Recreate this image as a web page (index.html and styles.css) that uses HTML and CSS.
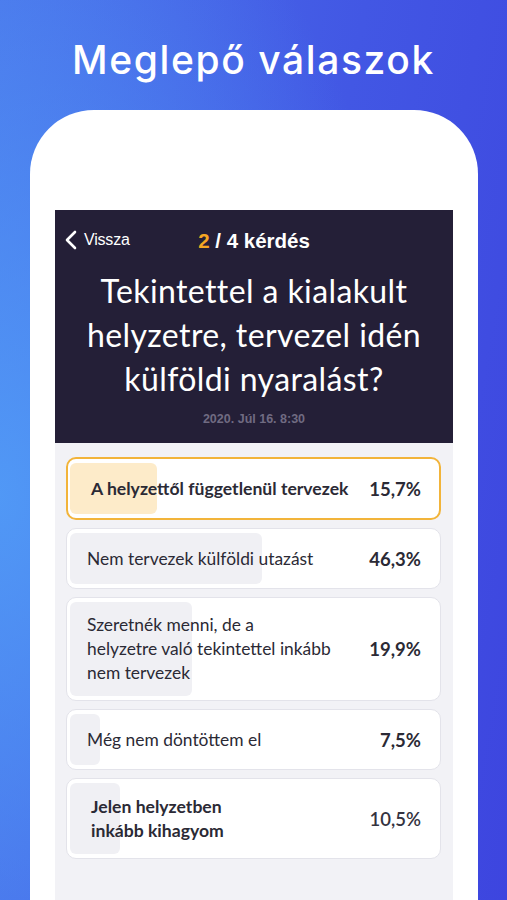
FILE: index.html
```html
<!DOCTYPE html>
<html lang="hu">
<head>
    <meta charset="UTF-8">
    <meta name="viewport" content="width=device-width, initial-scale=1.0">
    <title>Meglepő válaszok</title>
    <link rel="stylesheet" href="styles.css">
</head>
<body>
    <h1 class="headline">Meglepő válaszok</h1>
    <div class="phone">
        <div class="screen">
            <div class="question-header">
                <div class="nav-row">
                    <a class="back-link" href="#">
                        <svg width="12" height="20" viewBox="0 0 12 20"><polyline points="10,2 2,10 10,18" fill="none" stroke="#fff" stroke-width="2.6" stroke-linecap="round" stroke-linejoin="round"/></svg>
                        Vissza
                    </a>
                    <div class="counter"><span class="current">2</span> / 4 kérdés</div>
                </div>
                <p class="question">Tekintettel a kialakult helyzetre, tervezel idén külföldi nyaralást?</p>
                <p class="date">2020. Júl 16. 8:30</p>
            </div>
            <div class="answers">
                <div class="answer selected">
                    <div class="fill" style="width: 87px"></div>
                    <span class="answer-text bold">A helyzettől függetlenül tervezek</span>
                    <span class="percent">15,7%</span>
                </div>
                <div class="answer">
                    <div class="fill" style="width: 192px"></div>
                    <span class="answer-text">Nem tervezek külföldi utazást</span>
                    <span class="percent">46,3%</span>
                </div>
                <div class="answer">
                    <div class="fill" style="width: 122px"></div>
                    <span class="answer-text">Szeretnék menni, de a<br>helyzetre való tekintettel inkább<br>nem tervezek</span>
                    <span class="percent">19,9%</span>
                </div>
                <div class="answer">
                    <div class="fill" style="width: 30px"></div>
                    <span class="answer-text">Még nem döntöttem el</span>
                    <span class="percent">7,5%</span>
                </div>
                <div class="answer tall">
                    <div class="fill" style="width: 50px"></div>
                    <span class="answer-text bold">Jelen helyzetben<br>inkább kihagyom</span>
                    <span class="percent light">10,5%</span>
                </div>
            </div>
        </div>
    </div>
</body>
</html>
```

FILE: styles.css
```css
body {
    margin: 0;
    height: 900px;
    overflow: hidden;
    font-family: Lato, "Noto Sans", sans-serif;
    background:
        radial-gradient(ellipse 420px 700px at 0% 55%, rgba(82, 160, 248, 0.85) 0%, rgba(82, 160, 248, 0) 100%),
        linear-gradient(100deg, #4a72ea 0%, #4257e4 55%, #3d45df 100%);
    display: flex;
    flex-direction: column;
}
.headline {
    margin: 0;
    padding-top: 38px;
    height: 74px;
    box-sizing: border-box;
    text-align: center;
    color: white;
    font-family: Inter, sans-serif;
    font-weight: 500;
    font-size: 39px;
    letter-spacing: 1.6px;
    line-height: 44px;
}
.phone {
    flex: 1;
    margin: 36px 29px 0 30px;
    background: white;
    border-radius: 64px 64px 0 0;
    padding: 100px 25px 0;
    display: flex;
}
.screen {
    flex: 1;
    background: #f2f2f6;
    display: flex;
    flex-direction: column;
}
.question-header {
    background: #241f37;
    height: 233px;
    box-sizing: border-box;
    padding: 20px 8px 0;
    color: white;
    text-align: center;
}
.nav-row {
    position: relative;
    height: 22px;
    display: flex;
    justify-content: center;
    align-items: center;
}
.back-link {
    position: absolute;
    left: 2px;
    top: 0;
    display: flex;
    align-items: center;
    gap: 7px;
    color: white;
    text-decoration: none;
    font-size: 16px;
    font-family: "Liberation Sans", sans-serif;
    letter-spacing: -0.2px;
}
.counter {
    font-size: 20.5px;
    font-weight: bold;
    font-family: "Liberation Sans", sans-serif;
}
.current {
    color: #f5a623;
}
.question {
    margin: 17px 0 0;
    font-size: 32px;
    line-height: 44px;
    font-weight: 400;
    letter-spacing: 0.4px;
    padding: 0 12px;
}
.date {
    margin: 11px 0 0;
    font-size: 12.5px;
    font-weight: bold;
    color: #706b82;
    font-family: "Liberation Sans", sans-serif;
}
.answers {
    padding: 14px 12px 0 11px;
    display: flex;
    flex-direction: column;
    gap: 8px;
}
.answer {
    position: relative;
    background: white;
    border: 1px solid #e3e3ea;
    border-radius: 10px;
    min-height: 61px;
    box-sizing: border-box;
    padding: 15px 19px 15px 20px;
    display: flex;
    align-items: center;
    justify-content: space-between;
    gap: 12px;
    color: #2b2a35;
}
.answer.selected {
    border: 2px solid #f2b43a;
    min-height: 63px;
    padding-left: 23px;
    padding-right: 18px;
}
.answer.tall {
    min-height: 81px;
}
.fill {
    position: absolute;
    left: 3px;
    top: 4px;
    bottom: 4px;
    background: #f0f0f4;
    border-radius: 6px;
}
.selected .fill {
    background: #fdebc9;
    left: 2px;
}
.answer-text {
    position: relative;
    font-size: 17.4px;
    line-height: 24px;
}
.answer-text.bold {
    font-weight: bold;
    font-size: 17.6px;
    padding-left: 4px;
}
.selected .answer-text.bold {
    padding-left: 0;
}
.percent {
    position: relative;
    font-size: 18.5px;
    font-weight: bold;
    white-space: nowrap;
}
.percent.light {
    font-weight: 600;
    color: #34333f;
}
```
